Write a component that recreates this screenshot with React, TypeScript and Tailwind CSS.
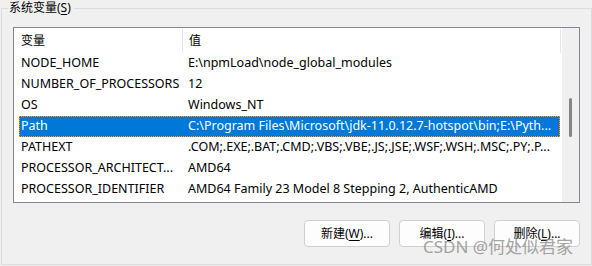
import React from 'react';

const rows = [
  { name: 'NODE_HOME', value: 'E:\\npmLoad\\node_global_modules' },
  { name: 'NUMBER_OF_PROCESSORS', value: '12' },
  { name: 'OS', value: 'Windows_NT' },
  { name: 'Path', value: 'C:\\Program Files\\Microsoft\\jdk-11.0.12.7-hotspot\\bin;E:\\Pyth...', selected: true },
  { name: 'PATHEXT', value: '.COM;.EXE;.BAT;.CMD;.VBS;.VBE;.JS;.JSE;.WSF;.WSH;.MSC;.PY;.P...' },
  { name: 'PROCESSOR_ARCHITECT...', value: 'AMD64' },
  { name: 'PROCESSOR_IDENTIFIER', value: 'AMD64 Family 23 Model 8 Stepping 2, AuthenticAMD' },
];

function WinButton({ label, hotkey }: { label: string; hotkey: string }) {
  return (
    <button className="w-[86px] h-[27px] rounded-[4px] border border-[#d0d0d0] bg-[#fdfdfd] text-[12px] text-black flex items-center justify-center">
      {label}(<span className="underline underline-offset-2">{hotkey}</span>)...
    </button>
  );
}

export default function App() {
  return (
    <div
      className="w-[592px] h-[266px] bg-[#f0f0f0] relative overflow-hidden text-[12px] text-black"
      style={{ fontFamily: '"Noto Sans", "Noto Sans CJK SC", sans-serif' }}
    >
      <div className="pt-2 pl-px">
        {/* 分组框 */}
        <div className="relative w-[591px] h-[257px] border border-[#dcdcdc]">
          <div className="absolute -top-[9px] left-[6px] bg-[#f0f0f0] pl-px pr-[3px] leading-[16px]">
            系统变量(<span className="underline underline-offset-2">S</span>)
          </div>

          {/* 列表 */}
          <div className="ml-[11px] mt-[18px] w-[567px] h-[176px] border border-[#828790] bg-white flex">
            <div className="w-[548px] flex flex-col">
              <div className="h-[25px] flex">
                <div className="w-[168px] pl-[7px] flex items-center">变量</div>
                <div className="w-px mt-px h-[24px] bg-[#e5e5e5]" />
                <div className="w-[377px] pl-[6px] flex items-center">值</div>
                <div className="w-px mt-px h-[24px] bg-[#e5e5e5]" />
              </div>
              {rows.map((r) => (
                <div
                  key={r.name}
                  className={
                    r.selected
                      ? 'ml-[5px] w-[541px] h-[21px] flex items-center text-[12.5px] bg-[#0078d7] text-white border border-dotted border-[#f0a040]'
                      : 'ml-[5px] w-[541px] h-[21px] flex items-center text-[12.5px] border border-transparent'
                  }
                >
                  <div className="w-[167px] pl-px whitespace-nowrap overflow-hidden">{r.name}</div>
                  <div className="flex-1 pl-px whitespace-nowrap overflow-hidden">{r.value}</div>
                </div>
              ))}
            </div>
            {/* 滚动条 */}
            <div className="w-[17px] bg-[#f0f0f0] pt-[70px] pl-[7px]">
              <div className="w-[3px] h-[39px] rounded-full bg-[#858585]" />
            </div>
          </div>

          {/* 按钮 */}
          <div className="ml-[11px] mt-[17px] w-[567px] flex justify-end gap-[9px]">
            <WinButton label="新建" hotkey="W" />
            <WinButton label="编辑" hotkey="I" />
            <WinButton label="删除" hotkey="L" />
          </div>
        </div>
      </div>

      {/* 水印 */}
      <div className="absolute left-[423px] top-[237px] text-[17px] leading-[20px] text-[#8c8c8c]/80 whitespace-nowrap">
        CSDN @何处似君家
      </div>
    </div>
  );
}
